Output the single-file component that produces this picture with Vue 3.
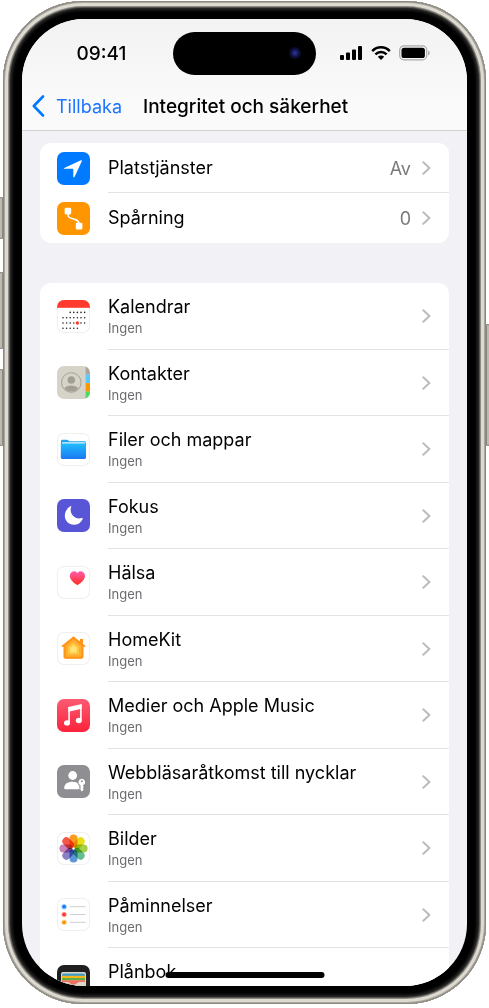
<template>
  <div class="page">
    <div class="phone">
      <span class="side-button action"></span>
      <span class="side-button volume-up"></span>
      <span class="side-button volume-down"></span>
      <span class="side-button power"></span>

      <div class="screen">
        <header class="header">
          <div class="status-bar">
            <span class="time">09:41</span>
            <div class="island"><span class="camera"></span></div>
            <div class="status-icons">
              <svg width="23" height="16" viewBox="0 0 23 16">
                <rect x="0" y="10" width="4" height="5" rx="1" />
                <rect x="6" y="7.5" width="4" height="7.5" rx="1" />
                <rect x="12" y="4.5" width="4" height="10.5" rx="1" />
                <rect x="18" y="1" width="4" height="14" rx="1" />
              </svg>
              <svg width="20" height="16" viewBox="0 0 20 16">
                <g fill="none" stroke="#000" stroke-width="2.5">
                  <path d="M1.2 6.1C6.2 1.1 13.8 1.1 18.8 6.1" />
                  <path d="M4.4 9.4C7.6 6.3 12.4 6.3 15.6 9.4" />
                </g>
                <path d="M6.8 11.7C8.6 10.1 11.4 10.1 13.2 11.7L10 15Z" />
              </svg>
              <svg width="32" height="16" viewBox="0 0 32 16">
                <rect x="0.7" y="0.9" width="27" height="14" rx="4.2" fill="none" stroke="#a9a9ab" stroke-width="1.2" />
                <rect x="2.5" y="2.7" width="23.4" height="10.4" rx="2.6" />
                <path d="M29.1 5.4C31.3 6.2 31.3 9.6 29.1 10.4Z" fill="#a9a9ab" />
              </svg>
            </div>
          </div>
          <nav class="nav-bar">
            <button type="button" class="back">
              <svg width="13" height="22" viewBox="0 0 13 22">
                <path d="M11 1.5L1.8 11L11 20.5" fill="none" stroke="#007aff" stroke-width="2.6" stroke-linecap="round" stroke-linejoin="round" />
              </svg>
              <span>Tillbaka</span>
            </button>
            <h1>Integritet och säkerhet</h1>
          </nav>
        </header>

        <main class="content">
          <ul v-for="(group, index) in groups" :key="index" class="card" :class="{ apps: index === 1 }">
            <li v-for="item in group" :key="item.icon">
              <a href="#" class="row">
                <svg class="icon" :class="item.icon" width="33" height="33" viewBox="0 0 33 33">
                  <path v-if="item.icon === 'location'" d="M7.2 15.9L24 8.3C24.7 8 25.1 8.5 24.8 9.2L17.5 25.1C17.1 25.8 16.3 25.6 16.3 24.8V17.4C16.3 17 16.1 16.8 15.7 16.8H7.5C6.6 16.8 6.5 16.2 7.2 15.9Z" fill="#fff" />

                  <template v-else-if="item.icon === 'tracking'">
                    <path d="M11 10V12.5C11 15.5 13 16 16.5 17C20 18 22 18.7 22 21.5V23" fill="none" stroke="#fff" stroke-width="1.4" />
                    <rect x="7.6" y="5.8" width="6.6" height="6.6" rx="1.3" fill="#fff" />
                    <rect x="18.8" y="20.8" width="6.6" height="6.6" rx="1.3" fill="#fff" />
                  </template>

                  <template v-else-if="item.icon === 'calendar'">
                    <rect width="33" height="7.8" fill="#ff3b30" />
                    <circle v-for="dot in calendarDots" :key="dot.x + '-' + dot.y" :cx="dot.x" :cy="dot.y" r="0.8" fill="#222" />
                    <circle cx="20.4" cy="23" r="1.7" fill="#ff3b30" />
                  </template>

                  <template v-else-if="item.icon === 'contacts'">
                    <rect x="28.6" width="5" height="8.5" fill="#aaa69f" />
                    <rect x="28.6" y="8.5" width="5" height="8.7" fill="#5ac8fa" />
                    <rect x="28.6" y="17.2" width="5" height="8.4" fill="#ff9500" />
                    <rect x="28.6" y="25.6" width="5" height="8" fill="#4cd964" />
                    <circle cx="14.3" cy="16.5" r="9.8" fill="none" stroke="#a39f96" stroke-width="1" />
                    <circle cx="14.3" cy="14" r="3.8" fill="#a39f96" />
                    <path d="M7.4 22.2C9.8 18.6 18.8 18.6 21.2 22.2C17.9 26.6 10.7 26.6 7.4 22.2Z" fill="#a39f96" />
                  </template>

                  <template v-else-if="item.icon === 'files'">
                    <defs>
                      <linearGradient id="folder" x2="0" y2="1">
                        <stop offset="0" stop-color="#20bdfd" />
                        <stop offset="1" stop-color="#1a78f2" />
                      </linearGradient>
                    </defs>
                    <path d="M4 8.2Q4 6.8 5.4 6.8H9.8Q10.8 6.8 11.4 7.6L12 8.2H27.5Q28.8 8.2 28.8 9.5V14H4Z" fill="#1da4ea" />
                    <rect x="5" y="9.2" width="22.8" height="3" fill="#d9f2fc" />
                    <path d="M3.8 10.5H29V24.6Q29 26 27.6 26H5.2Q3.8 26 3.8 24.6Z" fill="url(#folder)" />
                  </template>

                  <path v-else-if="item.icon === 'focus'" d="M14.3 7.4C11.7 13.7 17.1 21.2 24.9 19C25.6 18.8 26 19.3 25.7 19.9C23.9 23.8 20.7 25.8 16.9 25.8C11.8 25.8 7.8 21.8 7.8 16.8C7.8 12.8 10.1 9.1 13.5 7.3C14.1 7 14.5 6.9 14.3 7.4Z" fill="#fff" />

                  <template v-else-if="item.icon === 'health'">
                    <defs>
                      <linearGradient id="heart" x2="0" y2="1">
                        <stop offset="0" stop-color="#ff5fae" />
                        <stop offset="1" stop-color="#ff2a1f" />
                      </linearGradient>
                    </defs>
                    <path d="M20.4 6.9C18.2 3.8 12.8 5 12.8 10C12.8 14 17.2 17 20.4 19.2C23.6 17 28 14 28 10C28 5 22.6 3.8 20.4 6.9Z" fill="url(#heart)" />
                  </template>

                  <template v-else-if="item.icon === 'home'">
                    <path d="M23 10V6.9H26V12.5" fill="#ff9316" />
                    <path d="M16.5 4.8L28.2 14.2H26V25Q26 26.3 24.7 26.3H8.3Q7 26.3 7 25V14.2H4.8Z" fill="#ff9417" stroke="#ff9417" stroke-width="1" stroke-linejoin="round" />
                    <path d="M16.5 7.2L24.4 13.6V24.8H8.6V13.6Z" fill="#ffad30" />
                    <path d="M16.5 10.2L22 14.7V22.5H11V14.7Z" fill="#ffc63f" />
                    <path d="M16.5 13L19.8 15.8V20.5H13.2V15.8Z" fill="#ffe375" />
                  </template>

                  <template v-else-if="item.icon === 'music'">
                    <defs>
                      <linearGradient id="music" x2="0" y2="1">
                        <stop offset="0" stop-color="#fb5b72" />
                        <stop offset="1" stop-color="#fa233b" />
                      </linearGradient>
                    </defs>
                    <rect width="33" height="33" fill="url(#music)" />
                    <path d="M11.3 8L24.7 5V9.8L11.3 12.8Z" fill="#fff" />
                    <path d="M12.1 8V23.3M23.9 6V20.8" stroke="#fff" stroke-width="1.6" />
                    <ellipse cx="10" cy="23.9" rx="3" ry="2.7" fill="#fff" />
                    <ellipse cx="21.8" cy="21.5" rx="3" ry="2.7" fill="#fff" />
                  </template>

                  <template v-else-if="item.icon === 'passkeys'">
                    <circle cx="15.7" cy="10.5" r="4.4" fill="#fff" />
                    <path d="M7.2 23.2C7.2 18.8 10.8 16.7 15.4 16.7C18 16.7 20.5 17.4 21.4 19C21.8 19.8 22.6 20.3 22.6 21V24.2H8.2Q7.2 24.2 7.2 23.2Z" fill="#fff" />
                    <path d="M24.8 13.8A3.4 3.4 0 0 0 23.5 20.3V24.9L24.8 26.4L26.8 24.6L25.7 23.5L26.9 22.2L25.9 21L26.1 20.3A3.4 3.4 0 0 0 24.8 13.8Z" fill="#fff" stroke="#8e8e93" stroke-width="1.6" paint-order="stroke" />
                    <circle cx="24.8" cy="16.2" r="1" fill="#8e8e93" />
                  </template>

                  <g v-else-if="item.icon === 'photos'">
                    <rect
                      v-for="(color, i) in petals"
                      :key="color"
                      class="petal"
                      x="12.5"
                      y="2.4"
                      width="8"
                      height="13"
                      rx="4"
                      :fill="color"
                      :transform="`rotate(${i * 45} 16.5 16.5)`"
                    />
                  </g>

                  <template v-else-if="item.icon === 'reminders'">
                    <g v-for="(color, i) in ['#147efb', '#ff3b30', '#ff9500']" :key="color">
                      <circle cx="7.1" :cy="8.7 + i * 7.8" r="2.8" :fill="color" opacity="0.35" />
                      <circle cx="7.1" :cy="8.7 + i * 7.8" r="1.9" :fill="color" />
                      <path :d="`M12.7 ${8.7 + i * 7.8}H28.7`" stroke="#c9c9cb" stroke-width="0.9" />
                    </g>
                  </template>

                  <template v-else-if="item.icon === 'wallet'">
                    <rect x="4" y="7" width="25" height="22" rx="2" fill="#dcd9cb" />
                    <path d="M5 11V10Q5 8.5 6.5 8.5H26.5Q28 8.5 28 10V11Z" fill="#3f9bcb" />
                    <rect x="5" y="10.8" width="23" height="2.4" fill="#f4b619" />
                    <rect x="5" y="13" width="23" height="2.4" fill="#5faf46" />
                    <path d="M5 15.2H28V20H5Z" fill="#f0705d" />
                    <path d="M4 17H10.5C12.5 17 13.2 19.6 16.5 19.6S20.5 17 22.5 17H29V29H4Z" fill="#dcd9cb" />
                  </template>
                </svg>

                <span class="labels">
                  <span class="title">{{ item.title }}</span>
                  <span v-if="item.detail" class="detail">{{ item.detail }}</span>
                </span>
                <span v-if="item.value" class="value">{{ item.value }}</span>
                <svg v-if="item.value || item.detail" class="chevron" width="9" height="14" viewBox="0 0 9 14">
                  <path d="M1.3 1.2L7.4 7L1.3 12.8" fill="none" stroke="#bcbcbf" stroke-width="2" stroke-linecap="round" stroke-linejoin="round" />
                </svg>
              </a>
            </li>
          </ul>
        </main>

        <span class="home-indicator"></span>
      </div>
    </div>
  </div>
</template>

<script setup>
const groups = [
  [
    { icon: 'location', title: 'Platstjänster', value: 'Av' },
    { icon: 'tracking', title: 'Spårning', value: '0' },
  ],
  [
    { icon: 'calendar', title: 'Kalendrar', detail: 'Ingen' },
    { icon: 'contacts', title: 'Kontakter', detail: 'Ingen' },
    { icon: 'files', title: 'Filer och mappar', detail: 'Ingen' },
    { icon: 'focus', title: 'Fokus', detail: 'Ingen' },
    { icon: 'health', title: 'Hälsa', detail: 'Ingen' },
    { icon: 'home', title: 'HomeKit', detail: 'Ingen' },
    { icon: 'music', title: 'Medier och Apple Music', detail: 'Ingen' },
    { icon: 'passkeys', title: 'Webbläsaråtkomst till nycklar', detail: 'Ingen' },
    { icon: 'photos', title: 'Bilder', detail: 'Ingen' },
    { icon: 'reminders', title: 'Påminnelser', detail: 'Ingen' },
    { icon: 'wallet', title: 'Plånbok' },
  ],
];

// first and last column with a dot, for each week
const weeks = [[2, 6], [0, 6], [0, 6], [0, 4]];
const calendarDots = weeks.flatMap(([from, to], week) => {
  const dots = [];
  for (let day = from; day <= to; day++) {
    dots.push({ x: 6 + day * 3.6, y: 12.4 + week * 5.3 });
  }
  return dots;
});

const petals = ['#fb9d1e', '#e9dd15', '#a6d04a', '#63bd91', '#5b97d6', '#8b7fc6', '#c884b8', '#f4574a'];
</script>

<style>
body {
  margin: 0;
  background: #ffffff;
}
</style>

<style scoped>
.page {
  box-sizing: border-box;
  height: 100vh;
  padding: 1px 3px 4px;
  display: flex;
  font-family: Inter, "Liberation Sans", sans-serif;
  color: #000000;
}

.phone {
  position: relative;
  flex: 1;
  min-width: 0;
  box-sizing: border-box;
  display: flex;
  padding: 18px 19px;
  border-radius: 80px;
  background: #000000;
  box-shadow:
    inset 0 0 0 1px #8c8880,
    inset 0 0 0 2px #aaa79f,
    inset 0 0 0 5px #dddbd1,
    inset 0 0 0 6px #8d8a83,
    inset 0 0 0 7px #55534f,
    inset 0 0 3px 9px #2b2b2b;
}

.side-button {
  position: absolute;
  width: 4px;
  left: -4px;
  box-sizing: border-box;
  border: 1px solid #8c8880;
  border-radius: 2px 0 0 2px;
  background: #bdbab2;
}

.action {
  top: 196px;
  height: 42px;
}

.volume-up {
  top: 271px;
  height: 77px;
}

.volume-down {
  top: 368px;
  height: 77px;
}

.power {
  top: 323px;
  left: auto;
  right: -4px;
  height: 122px;
  border-radius: 0 2px 2px 0;
}

.screen {
  position: relative;
  flex: 1;
  min-width: 0;
  display: flex;
  flex-direction: column;
  overflow: hidden;
  border-radius: 62px;
  background: #f2f1f6;
}

.header {
  border-bottom: 1px solid #d0d0d3;
  background: linear-gradient(#f2f2f3, #fafafb 75%);
}

.status-bar {
  display: grid;
  grid-template-columns: 1fr 143px 1fr;
  align-items: center;
  height: 68px;
}

.time {
  padding-left: 8px;
  text-align: center;
  font-size: 19px;
  font-weight: 500;
}

.island {
  display: flex;
  align-items: center;
  justify-content: flex-end;
  height: 43px;
  border-radius: 22px;
  background: #000000;
}

.camera {
  width: 12px;
  height: 12px;
  margin-right: 15px;
  border-radius: 50%;
  background: radial-gradient(#27318c 10%, #0b0d38 50%, #08081a);
}

.status-icons {
  display: flex;
  justify-content: center;
  gap: 8px;
  padding-right: 12px;
}

.nav-bar {
  display: flex;
  align-items: center;
  height: 38px;
  padding: 0 10px 5px;
}

.back {
  display: flex;
  align-items: center;
  gap: 11px;
  padding: 0;
  border: 0;
  background: none;
  color: #1c75ff;
  font: inherit;
  font-size: 18px;
  cursor: pointer;
}

h1 {
  margin: 0 0 0 21px;
  font-size: 19px;
  font-weight: 500;
  white-space: nowrap;
}

.content {
  flex: 1;
  min-height: 0;
  display: flex;
  flex-direction: column;
  gap: 40px;
  padding: 12px 18px 0;
}

.card {
  margin: 0;
  padding: 0;
  list-style: none;
  border-radius: 11px;
  background: #ffffff;
}

.card li {
  display: flex;
  min-height: 50px;
}

.row {
  flex: 1;
  display: flex;
  align-items: center;
  padding-left: 17px;
  color: inherit;
  text-decoration: none;
}

.labels {
  flex: 1;
  display: flex;
  flex-direction: column;
  margin-left: 18px;
}

/* hairline from the text column to the card's edge */
.card li {
  background: linear-gradient(#e3e3e6, #e3e3e6) 68px 100% / 100% 1px no-repeat;
}

.card li:last-child {
  background: none;
}

/* the long list runs on below the screen */
.apps {
  flex: 1;
  display: flex;
  flex-direction: column;
  border-radius: 11px 11px 0 0;
}

.apps li {
  flex: 1 0 66px;
}

.apps li:last-child {
  flex: 0 0 38px;
  min-height: 0;
}

.apps .row {
  min-height: 66px;
}

.apps .labels {
  min-height: 42px;
}

.title {
  font-size: 18px;
  line-height: 24px;
}

.detail {
  color: #6c6c70;
  font-size: 13px;
  line-height: 18px;
}

.value {
  color: #7a7a7e;
  font-size: 18px;
}

.chevron {
  margin: 0 18px 0 11px;
}

.icon {
  border-radius: 7px;
}

.location {
  background: #007aff;
}

.tracking {
  background: #ff9500;
}

.contacts {
  background: #d6d4c9;
}

.focus {
  background: #5856d6;
}

.passkeys {
  background: #8e8e93;
}

.wallet {
  background: #1f1f21;
}

.calendar,
.files,
.health,
.home,
.photos,
.reminders {
  box-shadow: inset 0 0 0 1px #efeff0;
}

.petal {
  mix-blend-mode: multiply;
}

.home-indicator {
  position: absolute;
  bottom: 8px;
  left: 50%;
  width: 159px;
  height: 6px;
  border-radius: 3px;
  background: #000000;
  transform: translateX(-50%);
}
</style>
